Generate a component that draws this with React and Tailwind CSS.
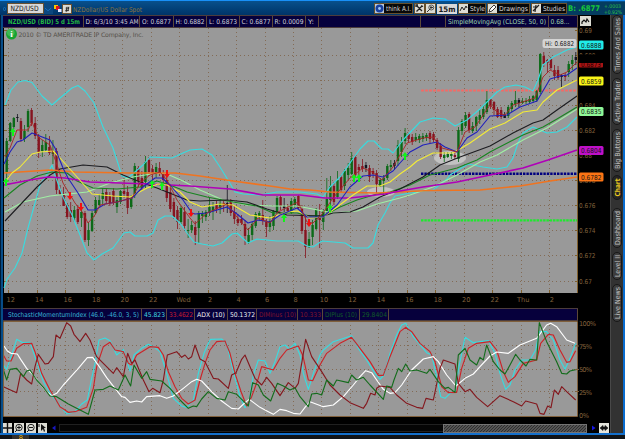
import React from "react";

const GRID_X = Array.from({ length: 20 }, (_, i) => Math.round(8.3 + i * 28.47) + 0.5);
const GRID_Y = Array.from({ length: 11 }, (_, i) => Math.round(30 + i * 25.05) + 0.5);
const TIMES = ["12", "14", "16", "18", "20", "22", "Wed", "2", "4", "6", "8", "10", "12", "14", "16", "18", "20", "22", "Thu", "2"];

// One candle per entry: high, open/close top, open/close bottom, low, colour key.
const CANDLES = `138 141 172 178 G;122 123 141 142 G;117 118 127 129 G;114 117 118 122 K;118 121 139 142 R;125 131 139 142 G;109 111 127 132 G;108 110 123 126 R;117 123 136 139 R;134 137 152 158 R;140 145 151 157 G;134 142 150 152 G;136 147 153 155 R;140 152 154 164 G;148 151 190 194 R;185 190 194 195 R;187 194 206 206 R;203 205 217 219 R;202 210 217 222 R;206 210 218 222 G;205 209 222 224 R;205 212 218 227 G;211 213 240 242 R;222 230 240 246 G;211 213 231 232 G;197 200 213 214 G;194 200 205 206 G;188 193 199 204 G;188 192 201 204 R;192 196 203 206 R;188 191 203 205 R;197 200 207 213 G;190 191 202 204 G;178 191 194 198 R;186 192 208 214 R;195 198 207 209 G;163 166 195 198 G;166 168 181 187 R;171 178 188 190 R;156 162 182 188 G;157 160 172 176 R;165 169 173 180 R;163 167 174 178 G;162 168 173 176 R;170 173 180 183 R;174 180 198 202 R;185 192 209 212 R;198 202 217 219 R;206 210 222 229 R;206 208 222 224 G;207 212 226 231 R;219 230 231 238 G;221 225 230 233 G;221 227 235 245 R;211 213 228 243 G;211 213 216 223 G;210 212 217 221 G;197 207 213 216 G;202 207 211 220 G;201 205 209 213 R;198 203 208 214 G;200 203 205 212 R;185 203 205 213 K;199 202 213 216 R;206 212 219 224 R;214 219 223 226 R;215 219 223 225 R;220 224 236 245 R;228 235 243 244 G;222 224 235 240 G;212 214 226 228 G;211 213 217 221 G;200 215 221 225 R;219 222 227 237 R;216 221 227 232 G;210 211 226 230 G;196 198 212 213 G;195 197 206 210 R;198 206 208 214 K;204 208 211 213 R;198 201 213 214 G;197 199 205 208 G;195 196 208 209 R;205 209 231 234 R;215 230 247 258 R;232 239 246 248 G;220 225 237 245 G;208 210 229 230 G;204 215 220 248 R;209 211 222 230 G;178 199 211 213 G;176 186 200 208 G;182 186 202 205 R;171 180 197 199 G;175 177 190 192 R;169 171 186 190 G;163 168 175 180 G;152 158 174 175 G;155 157 175 177 R;164 167 170 175 R;159 166 169 172 R;162 165 168 172 K;165 168 177 182 R;168 171 174 178 R;170 173 184 193 R;178 180 186 187 G;175 178 181 195 G;164 166 178 180 G;160 165 167 171 G;160 163 166 170 K;140 145 161 166 G;137 142 152 157 G;128 133 141 144 G;133 134 139 142 R;134 137 142 145 R;133 137 140 142 G;134 136 140 143 G;133 136 139 142 G;133 135 138 141 G;131 133 139 143 R;132 134 140 142 R;138 140 148 150 R;143 146 157 159 R;152 155 158 162 G;152 154 157 158 G;152 154 156 159 G;151 155 157 159 R;127 130 159 162 G;119 121 131 135 G;112 115 126 128 G;112 114 130 133 R;122 126 131 133 G;116 117 126 131 G;109 115 120 124 G;105 109 117 119 G;91 100 112 114 G;98 99 106 109 R;101 102 110 115 R;107 109 117 118 R;107 110 117 119 R;112 115 118 118 K;105 107 116 118 G;101 103 109 112 G;91 100 104 107 G;98 100 103 107 K;98 101 103 104 G;98 101 102 104 G;96 99 102 104 G;95 96 101 103 G;90 91 100 102 G;53 54 92 94 G;52 56 64 67 R;59 60 63 73 R;57 59 68 70 R;65 70 76 80 R;66 70 78 80 R;74 75 77 87 K;73 75 77 81 R;61 64 72 77 G;55 60 64 70 G;52 57 60 65 K`
  .split(";")
  .map((row) => row.split(" "));
const CANDLE_FILL = { G: "#0c6a18", R: "#861420", K: "#141420" };

const PRICE_LINES = [
  { c: "#38dce0", p: "5,105 11,90 18,82 25,80.5 32,82.5 42,96 52,105 60,98 72,88 78,85.5 85,91 94,103 103,127 113,148 122,176 128,178 143,165 150,157 172,158 183,153 190,150 202,149 212,155 220,167 228,180 235,192 243,194 260,195 277,192 300,192 317,194 323,197 330,187 340,177 350,163 360,149 368,141 374,141 382,149 388,149 393,153 403,140 420,122 433,118 445,119 455,126 467,120 480,109 490,99 497,92 505,87 516,85 525,87 533,91 538,80 543,65 553,57 567,50 577,47" },
  { c: "#38dce0", p: "4,288 7,279 15,268 22,253 28,228 35,203 40,185 48,173 52,165 56,178 63,197 72,215 80,235 87,253 94,260 102,254 113,248 124,233 130,232 135,236 147,236 153,233 158,220 165,216 172,216 180,223 187,233 194,242 202,244 213,246 222,243 232,234 237,233 248,243 257,239 277,241 298,241 307,246 313,247 322,241 345,243 353,248 368,248 373,243 378,225 385,213 390,203 395,196 410,193 433,190 447,179 450,175 468,164 483,167 497,169 507,167 513,158 518,143 523,133 533,127 547,133 557,132 567,127 577,117" },
  { c: "#a0f0a4", p: "5,212 23,202 50,196 87,192 110,183 133,177 157,173 167,174 183,181 200,190 223,200 247,205 273,206 297,206 323,211 333,213 357,211 377,204 400,198 410,195 433,187 457,175 480,162 497,155 523,140 547,128 577,109" },
  { c: "#188420", p: "4,198 20,185 37,176 52,172 67,173 77,181 93,188 117,189 140,187 157,181 170,185 187,192 207,197 233,202 257,206 273,213 297,213 310,216 323,216 340,207 357,200 377,194 390,192 410,185 430,175 457,168 477,160 490,152 523,135 543,127 557,119 577,107" },
  { c: "#1c1c20", p: "5,221 20,205 37,187 50,175 60,169 83,165 107,167 123,175 140,182 157,188 187,200 200,201 227,200 247,202 267,209 287,215 323,216 333,213 350,212 363,207 380,197 390,193 400,189 423,177 440,165 460,157 490,146 513,133 533,123 543,120 557,110 577,96" },
  { c: "#f07420", w: 1.7, p: "4,173 50,170 75,172 130,173 175,173 200,176 233,181 270,186 290,189 310,190 330,192 377,193 430,190.5 480,190 520,186 550,181 577,177" },
  { c: "#b000b8", w: 1.7, p: "4,185 30,180 48,177 65,178 90,182 150,184 190,186 230,189 263,195 300,195 325,198 350,198 385,194 400,191 423,187 457,182 490,175 523,168 548,160 577,150" },
  { c: "#f4ec38", p: "5,182 12,173 20,167 32,154 40,152 53,151 60,158 78,178 92,194 113,196 130,197 147,188 158,184 167,185 180,192 190,202 202,207 220,204 233,205 250,215 270,218 287,212 298,211 310,218 323,217 337,207 353,195 367,186 380,186 390,182 400,174 410,167 417,161 433,153 453,153 470,143 490,129 505,123 523,112 537,110 543,102 557,90 577,80" },
  { c: "#2020bc", p: "4,164 10,152 17,142 23,140 32,133 37,135 50,140 55,148 63,168 68,178 78,193 88,210 95,210 105,204 117,202 132,198 143,187 155,178 162,178 170,185 183,200 192,213 195,214 207,213 227,207 237,214 248,223 258,220 270,222 280,215 297,208 307,217 323,217 337,205 350,187 363,176 373,175 383,177 393,171 400,163 410,152 423,145 437,142 445,147 457,152 467,138 477,132 490,116 507,115 520,107 537,101 550,79 560,76 567,75 577,68" },
  { c: "#a82424", w: 0.9, p: "5,157 10,148 17,130 28,130 32,122 38,137 50,145 57,165 63,183 75,203 83,213 88,223 95,215 100,205 117,202 132,198 140,183 150,175 160,172 167,180 177,200 190,218 195,224 207,213 227,204 237,217 248,230 258,218 270,223 278,212 298,202 307,222 313,223 323,213 333,198 350,178 363,168 372,172 382,180 393,167 397,160 407,143 423,138 433,137 442,148 457,152 465,132 475,127 490,105 498,113 505,115 513,105 535,98 543,77 550,70 560,75 567,72 577,62" },
];

// Oscillator traces, digitised at three units to the pixel.
const STUDY_LINES = [
  { c: "#38dce0", p: "10,195 20,208 35,165 50,118 68,128 90,127 110,185 130,245 150,280 175,310 200,342 225,335 245,312 262,300 275,235 285,190 297,120 315,114 330,122 350,165 370,148 390,213 402,165 425,145 445,133 460,140 480,155 500,220 520,295 545,318 560,322 580,300 595,220 612,160 625,130 632,118 665,117 680,130 700,215 720,290 735,323 747,310 760,225 775,180 795,183 810,220 825,185 840,140 855,135 868,147 885,130 900,165 910,220 925,268 940,220 960,165 970,150 1000,125 1055,107 1075,145 1100,180 1125,220 1140,238 1152,225 1170,160 1190,105 1205,75 1217,70 1240,110 1280,158 1295,165 1310,230 1322,290 1335,295 1350,280 1365,275 1375,210 1395,112 1420,128 1465,122 1485,160 1500,220 1517,268 1530,255 1545,210 1565,180 1590,180 1607,150 1618,95 1640,95 1660,120 1680,180 1695,208 1710,175 1727,130" },
  { c: "#cc2428", p: "10,165 20,183 33,183 50,145 70,131 95,130 105,155 125,220 150,270 180,320 205,337 225,335 260,322 280,265 290,200 310,140 330,127 345,150 370,155 385,190 395,195 410,165 450,140 475,142 490,165 505,215 525,260 545,295 565,312 585,300 600,240 615,190 630,150 650,125 675,123 690,160 705,220 725,280 740,318 755,290 775,235 785,200 820,210 840,175 860,150 895,138 908,165 925,240 938,242 960,195 980,160 1020,130 1055,112 1080,145 1110,185 1135,226 1150,226 1170,170 1200,95 1217,82 1235,95 1260,130 1290,155 1305,185 1325,260 1345,278 1370,277 1385,205 1405,145 1430,130 1470,125 1490,150 1510,215 1525,247 1545,230 1570,190 1610,180 1622,130 1645,103 1660,105 1680,150 1700,187 1710,185 1727,152" },
  { c: "#ffffff", p: "10,135 22,153 33,160 52,162 62,178 80,205 100,225 120,252 140,275 155,287 170,280 190,255 210,233 235,205 262,173 278,172 300,203 320,233 345,265 365,290 375,292 390,307 410,303 425,306 440,290 480,287 500,295 520,288 550,265 575,245 590,238 605,243 635,275 665,303 695,325 715,327 735,308 748,298 780,322 805,335 820,343 840,328 860,332 880,340 900,342 915,322 930,305 970,320 1000,315 1030,290 1060,255 1080,230 1097,212 1115,218 1130,240 1150,268 1170,280 1185,278 1205,255 1235,210 1270,177 1300,170 1315,185 1340,225 1368,258 1395,235 1420,222 1440,200 1470,168 1490,156 1525,160 1560,135 1610,115 1640,75 1652,70 1670,80 1700,120 1725,130" },
  { c: "#84181e", p: "10,260 50,278 62,220 80,240 95,252 105,200 115,163 135,192 145,190 160,170 168,105 180,115 200,68 212,78 222,103 240,125 257,100 270,120 290,170 310,190 340,220 350,203 370,230 383,160 395,190 405,180 430,240 447,275 458,265 480,278 490,240 502,165 530,155 545,172 555,165 565,177 575,170 585,135 600,177 615,185 640,235 655,237 685,265 695,225 708,218 725,178 735,165 750,200 765,235 785,255 800,232 815,250 840,287 865,248 885,265 895,250 905,190 917,118 935,170 965,215 990,255 1020,285 1050,308 1090,325 1100,310 1112,280 1125,285 1130,265 1140,258 1170,262 1190,285 1220,310 1250,322 1268,325 1278,295 1300,300 1320,205 1330,180 1365,192 1375,250 1395,275 1410,268 1430,292 1463,320 1500,287 1540,305 1565,318 1577,303 1610,312 1620,340 1632,343 1643,318 1653,323 1663,270 1675,283 1685,260 1700,275 1727,300" },
  { c: "#146c1c", p: "10,208 20,240 30,208 50,205 70,230 80,213 90,210 110,240 130,262 150,288 170,290 205,312 265,343 285,270 310,268 330,258 355,270 375,225 392,258 402,195 425,235 440,215 450,238 485,243 510,265 540,300 565,325 580,318 590,320 605,297 625,275 650,295 675,300 685,275 710,283 735,308 745,318 758,248 775,255 790,285 812,303 832,250 850,258 870,270 885,263 900,290 925,320 935,282 950,280 965,285 980,240 1000,258 1010,240 1045,248 1055,225 1070,240 1090,232 1110,255 1150,298 1160,258 1175,262 1182,240 1195,205 1205,215 1217,192 1230,213 1250,210 1280,220 1290,208 1315,245 1335,265 1345,262 1365,277 1375,165 1395,145 1410,180 1430,195 1440,172 1450,180 1460,135 1480,185 1500,210 1515,222 1530,195 1547,163 1560,180 1578,198 1590,178 1610,180 1618,68 1640,125 1670,185 1685,220 1700,222 1710,213 1730,208" },
];

const UP_MARKS = [[6, 182], [13, 132], [152, 184], [162, 186], [284, 218], [330, 208], [354, 178], [359, 178], [405, 156]];
const DOWN_MARKS = [[70, 196], [81, 207], [167, 174], [191, 213], [309, 223]];

const PRICE_AXIS = ["0.69", "0.688", "0.686", "0.684", "0.682", "0.68", "0.678", "0.676", "0.674", "0.672", "0.67"];
const UI_FONT = "DejaVu Sans, Verdana, sans-serif";

function PriceChart() {
  return (
    <svg className="block h-[280px] w-[607px] shrink-0 overflow-visible" viewBox="3 28 607 280" fontFamily={UI_FONT}>
      <rect x="3" y="28" width="607" height="280" fill="#000" />
      <rect x="4" y="28" width="573" height="265" fill="#999999" />
      <g stroke="#80644a" strokeWidth="1" strokeDasharray="1 3" opacity=".85">
        {GRID_X.map((x) => <path key={x} d={`M${x} 28V293`} />)}
        {GRID_Y.slice(1).map((y) => <path key={y} d={`M4 ${y}H577`} />)}
      </g>
      <g stroke="#80602c">
        {GRID_X.map((x) => <path key={x} d={`M${x} 290V293`} />)}
        {GRID_Y.map((y) => <path key={y} d={`M4 ${y}h3M575 ${y}h3`} />)}
      </g>
      <ellipse cx="381" cy="192" rx="14" ry="5" fill="#ccc" opacity=".8" />
      <ellipse cx="450" cy="158" rx="16" ry="7" fill="#ccc" opacity=".8" />
      <path d="M421 90.5H577" stroke="#f06c68" strokeWidth="2" strokeDasharray="3 1" />
      <path d="M421 173.8H577" stroke="#000080" strokeWidth="2.4" strokeDasharray="2.4 1" />
      <path d="M421 220.3H577" stroke="#20e830" strokeWidth="2.2" strokeDasharray="2.5 .8" />
      {CANDLES.map(([hi, top, bottom, lo, tone], i) => {
        const x = 6.7 + i * 3.557;
        return (
          <g key={i} fill={CANDLE_FILL[tone]}>
            <rect x={x - 0.4} y={hi} width=".8" height={lo - hi} />
            <rect x={x - 1.2} y={top} width="2.4" height={Math.max(1, bottom - top)} />
          </g>
        );
      })}
      {PRICE_LINES.map((line, i) => (
        <polyline key={i} points={line.p} fill="none" stroke={line.c} strokeWidth={line.w || 1.1} strokeLinejoin="round" />
      ))}
      {UP_MARKS.map(([x, y]) => <path key={`${x}`} d={`M${x} ${y - 4}l3 4h-2v4h-2v-4h-2z`} fill="#10f418" />)}
      {DOWN_MARKS.map(([x, y]) => <path key={`${x}`} d={`M${x} ${y + 4}l-3 -4h2v-4h2v4h2z`} fill="#f41010" />)}
      <path d="M577.5 28V293" stroke="#80602c" />
      <circle cx="11.5" cy="34" r="5.5" fill="#18a430" />
      <circle cx="10.8" cy="32.5" r="3.8" fill="#58c868" opacity=".6" />
      <text x="11.5" y="37.4" fontSize="9" fontWeight="bold" textAnchor="middle" fill="#fff" fontFamily="Liberation Serif, serif">i</text>
      <text x="18.5" y="37" fontSize="6.2" fill="#55504a" textLength="125">2010 © TD AMERITRADE IP Company, Inc.</text>
      <rect x="542.5" y="39" width="34" height="9" rx="2" fill="#d4d4d4" />
      <text x="545" y="46.3" fontSize="6.6" fill="#181818" textLength="29" lengthAdjust="spacingAndGlyphs">Hi: 0.6882</text>
      <g fill="#80603c" fontSize="6.6">
        {PRICE_AXIS.map((label, i) => (
          <text key={label} x="579" y={33 + i * 25.05} textLength={label.length * 3.7 - 2} lengthAdjust="spacingAndGlyphs">{label}</text>
        ))}
        {TIMES.map((label, i) => <text key={i} x={10.8 + i * 28.47 + (i % 18 === 6 ? 2 : 0)} y="301.5" textAnchor="middle">{label}</text>)}
      </g>
      <rect x="578" y="54.5" width="26" height="8" fill="#000" />
      <rect x="579" y="62" width="24" height="5.5" rx="1" fill="#a81414" />
      <text x="581" y="67.3" fontSize="6.8" fill="#200" textLength="20" lengthAdjust="spacingAndGlyphs">0.6873</text>
      <rect x="579" y="58" width="24" height="5" fill="#000" />
      {[
        [45, "0.6888", "#20ece8"],
        [81, "0.6859", "#f8f418"],
        [111.5, "0.6835", "#90f898"],
        [150.5, "0.6804", "#c010c8"],
        [177, "0.6782", "#fc7414"],
      ].map(([y, label, fill]) => (
        <g key={label}>
          <rect x="579" y={y - 4.5} width="24.5" height="9" rx="1.5" fill={fill} />
          <text x="581" y={y + 2.6} fontSize="6.8" fill="#141414" textLength="20.5" lengthAdjust="spacingAndGlyphs">{label}</text>
        </g>
      ))}
    </svg>
  );
}

function StudyChart() {
  return (
    <svg className="block h-[102px] w-[607px] shrink-0 overflow-visible" viewBox="3 321 607 102" fontFamily={UI_FONT}>
      <rect x="3" y="321" width="607" height="102" fill="#000" />
      <rect x="4" y="321" width="573" height="95" fill="#999999" />
      <g stroke="#80644a" strokeDasharray="1 3" opacity=".85">
        {GRID_X.map((x) => <path key={x} d={`M${x} 321V416`} />)}
        {[346, 369.5, 391.5].map((y) => <path key={y} d={`M4 ${Math.round(y) - 0.5}H577`} />)}
      </g>
      <g transform="translate(0 300) scale(.33333)" fill="none" strokeWidth="3.4" strokeLinejoin="round">
        {STUDY_LINES.map((line) => <polyline key={line.c} points={line.p} stroke={line.c} />)}
      </g>
      <path d="M3.5 321.5H577.5V416.5H3.5z" fill="none" stroke="#80603c" />
      <path d="M575 346h4M575 369.5h4M575 391.5h4" stroke="#80603c" />
      <g fill="#80603c" fontSize="6.6">
        <text x="579" y="326" textLength="17">100%</text>
        <text x="579" y="349" textLength="13">75%</text>
        <text x="579" y="372" textLength="13">50%</text>
        <text x="579" y="394.5" textLength="13">25%</text>
        <text x="579" y="418" textLength="10">0%</text>
      </g>
    </svg>
  );
}

function Strip({ cells }) {
  return (
    <div className="flex h-[13px] w-[575px] shrink-0 border-y border-[#4c3c3c] bg-[#06003c]">
      {cells.map(([width, text, tone, pad, textWidth], i) => (
        <div key={i} className="h-full shrink-0 overflow-hidden border-r border-[#5c4838]" style={{ width }}>
          <svg className="block h-[11px] w-full" fontFamily={UI_FONT}>
            {text && (
              <text x={pad ?? 2} y="8" fontSize="6.7" fill={tone} textLength={textWidth} lengthAdjust="spacingAndGlyphs" fontWeight={text.startsWith("NZD") ? "bold" : "normal"}>{text}</text>
            )}
          </svg>
        </div>
      ))}
    </div>
  );
}

function WrenchIcon() {
  return (
    <svg className="h-[9px] w-[9px] shrink-0 bg-[#dcdcd4]" viewBox="0 0 9 9">
      <path d="M1.5 7.5L7 2M2 2L7 7M1 3V1h2" fill="none" stroke="#222" strokeWidth="1.3" />
      <path d="M6.5 1L8 3" stroke="#222" />
    </svg>
  );
}

function ToolButton({ width, label, labelWidth, children }) {
  return (
    <div className="flex h-[11px] shrink-0 items-center gap-[2px] overflow-hidden border border-[#66502c] bg-[#080808]" style={{ width }}>
      {children}
      {label && (
        <svg className="h-[9px] shrink-0 overflow-visible" style={{ width: labelWidth }} fontFamily={UI_FONT}>
          <text x="0" y="7" fontSize="6.8" fill="#d8d8d8" textLength={labelWidth} lengthAdjust="spacingAndGlyphs">{label}</text>
        </svg>
      )}
    </div>
  );
}

function TitleBar() {
  return (
    <header className="flex h-[15px] w-full shrink-0 items-center border-t border-[#1890f8] bg-linear-to-b from-[#08508c] to-[#003468] pt-px">
      <div className="ml-[3px] h-[4px] w-[3px] shrink-0 rounded-full border border-[#1870b8]" />
      <svg className="ml-px h-[11px] w-[37px] shrink-0 border border-[#685030] bg-[#d8d8d8]" viewBox="0 0 35 9" fontFamily={UI_FONT}>
        <text x="2.5" y="7.3" fontSize="7.2" fill="#101010" textLength="28" lengthAdjust="spacingAndGlyphs">NZD/USD</text>
      </svg>
      <svg className="h-[11px] w-[9px] shrink-0 bg-[#0c4880]" viewBox="0 0 10 11"><path d="M1 5l3.5 3L8 5" fill="none" stroke="#1c70c0" /></svg>
      <svg className="ml-px h-[10px] w-[8px] shrink-0" viewBox="0 0 8 10">
        <rect x="0" y="1" width="4" height="4" fill="#f4c800" />
        <rect x="2" y="2" width="3.5" height="4" fill="#e01020" />
        <rect x="4" y="5" width="3.5" height="3" fill="#e8e8ff" />
      </svg>
      <svg className="h-[10px] w-[10px] shrink-0 border border-[#685030] bg-[#dcdcd4]" viewBox="0 0 9 9"><path d="M2.5 6h4M4.5 2L3.5 8M6.5 2L5.5 7M3 3.5h4" stroke="#222" fill="none" /></svg>
      <svg className="ml-px h-[12px] w-[80px] shrink-0" viewBox="0 0 80 12" fontFamily={UI_FONT}>
        <text x="0" y="8.6" fontSize="6.7" fill="#8c7440" textLength="69" lengthAdjust="spacingAndGlyphs">NZDollar/US Dollar Spot</text>
      </svg>
      <div className="grow" />
      <ToolButton width="39px" label="think A.I." labelWidth="25">
        <svg className="h-[9px] w-[9px] shrink-0 bg-[#b8c8d8]" viewBox="0 0 9 9"><circle cx="4.5" cy="4.5" r="4" fill="#1840a0" /><circle cx="4.5" cy="4.5" r="1.4" fill="#a0c8f8" /></svg>
      </ToolButton>
      <div className="w-px shrink-0" />
      <ToolButton width="11px"><WrenchIcon /></ToolButton>
      <ToolButton width="11px">
        <svg className="h-[9px] w-[9px] shrink-0 bg-[#dcdcd4]" viewBox="0 0 9 9"><circle cx="5.3" cy="3.5" r="2.5" fill="none" stroke="#555" /><path d="M4 5L1 8M5 2v3M4 3.5h3" stroke="#333" /></svg>
      </ToolButton>
      <svg className="mx-px h-[10px] w-[20px] shrink-0 bg-[#d8d8d8]" viewBox="0 0 20 10" fontFamily={UI_FONT}>
        <text x="1.5" y="8" fontSize="7.6" fontWeight="bold" fill="#181818" textLength="17" lengthAdjust="spacingAndGlyphs">15m</text>
      </svg>
      <ToolButton width="28px" label="Style" labelWidth="15">
        <svg className="h-[9px] w-[9px] shrink-0 bg-[#dcdcd4]" viewBox="0 0 9 9"><path d="M1 7L3 3l2 3 2-4 1 2" fill="none" stroke="#222" /></svg>
      </ToolButton>
      <div className="w-px shrink-0" />
      <ToolButton width="43px" label="Drawings" labelWidth="29">
        <svg className="h-[9px] w-[9px] shrink-0 bg-[#dcdcd4]" viewBox="0 0 9 9"><path d="M1 8l1-3 4-4 2 2-4 4z" fill="#fff" stroke="#222" strokeWidth=".9" /></svg>
      </ToolButton>
      <div className="w-px shrink-0" />
      <ToolButton width="36px" label="Studies" labelWidth="22">
        <svg className="h-[9px] w-[9px] shrink-0 bg-[#dcdcd4]" viewBox="0 0 9 9"><path d="M1 7l6-6M4 1L3 8M1 3h3" stroke="#222" fill="none" strokeWidth="1.2" /></svg>
      </ToolButton>
      <svg className="h-[13px] w-[58px] shrink-0 bg-[#043c60]" viewBox="0 0 58 13" fontFamily={UI_FONT}>
        <text x="1" y="9" fontSize="7.8" fontWeight="bold" fill="#18c838" textLength="32" lengthAdjust="spacingAndGlyphs">B: .6877</text>
        <text x="37" y="5.6" fontSize="5.2" fill="#30c048" textLength="17" lengthAdjust="spacingAndGlyphs">+.0003</text>
        <text x="37" y="11.6" fontSize="5.2" fill="#30c048" textLength="18" lengthAdjust="spacingAndGlyphs">+0.92%</text>
      </svg>
    </header>
  );
}

const TABS = [
  ["Times And Sales", 59, false],
  ["Active Trader", 47, false],
  ["Big Buttons", 43, false],
  ["Chart", 25, true],
  ["Dashboard", 40, false],
  ["Level II", 28, false],
  ["Live News", 38, false],
];
const TAB_GAPS = [0, 4, 4, 3, 8, 4, 4];

function SideTabs() {
  return (
    <aside className="flex h-[418px] w-[13px] shrink-0 flex-col items-end border-l border-[#484848] bg-[#323232] pr-px">
      {TABS.map(([label, height, active], i) => (
        <div key={label} className={active ? "w-[10px] shrink-0 rounded-[5px] border border-[#181818] bg-[#242424]" : "w-[10px] shrink-0 rounded-[5px] border border-[#181818] bg-[#3c3c3c]"} style={{ height, marginTop: TAB_GAPS[i] }}>
          <svg className="block h-full w-[8px] overflow-visible" fontFamily={UI_FONT}>
            <text transform={`translate(6.6 ${height / 2 - 1}) rotate(-90)`} textAnchor="middle" fontSize="7" fontWeight={active ? "bold" : "normal"} fill={active ? "#e8c820" : "#c0c0c0"} textLength={active ? 18 : height - 6} lengthAdjust="spacingAndGlyphs">{label}</text>
          </svg>
        </div>
      ))}
    </aside>
  );
}

function ScrollRow() {
  return (
    <div className="flex h-[10px] w-[607px] shrink-0 items-center bg-black">
      <div className="flex gap-[2px]">
        <svg className="h-[10px] w-[9px] bg-[#dcdcd4]" viewBox="0 0 9 10"><path d="M4.5 0v10M0 5h9" stroke="#111" strokeWidth="1.4" /></svg>
        {["M3 4.5h4M5 2.5v4", "M3 4.5h4"].map((d) => (
          <svg key={d} className="h-[10px] w-[10px] bg-[#dcdcd4]" viewBox="0 0 10 10"><circle cx="5" cy="4.5" r="3.2" fill="none" stroke="#222" /><path d={`${d}M1 9l2-2`} stroke="#111" /></svg>
        ))}
        <svg className="h-[10px] w-[9px] bg-[#dcdcd4]" viewBox="0 0 9 10"><path d="M3 1v7l2-2 1 3 1-1-1-3h2z" fill="#111" /><path d="M1 1v3" stroke="#111" /></svg>
      </div>
      <svg className="ml-[2px] h-[10px] w-[10px]" viewBox="0 0 10 10"><path d="M6.5 2.5v5L3 5z" fill="#1818c0" /></svg>
      <div className="h-[8px] w-[384px] border-y border-l border-[#202020] bg-[#050505]" />
      <svg className="h-[9px] w-[144px]" viewBox="0 0 144 9">
        <defs>
          <pattern id="hatch" width="3" height="3" patternUnits="userSpaceOnUse">
            <rect width="3" height="3" fill="#545454" />
            <path d="M0 3L3 0" stroke="#303030" />
          </pattern>
        </defs>
        <rect x=".5" y=".5" width="143" height="8" fill="url(#hatch)" stroke="#747474" />
      </svg>
      <svg className="h-[10px] w-[10px]" viewBox="0 0 10 10"><path d="M5 2.5v5L8.5 5z" fill="#1818e0" /></svg>
      <svg className="ml-[2px] h-[10px] w-[10px] bg-[#e4e4dc]" viewBox="0 0 10 10"><path d="M1 5l3-2.5V4h2V2.5L9 5 6 7.5V6H4v1.5z" fill="#111" stroke="#111" strokeWidth=".6" /></svg>
    </div>
  );
}

const W = "#d0d0d8";
const TOP_CELLS = [
  ["81px", "NZD/USD (BID) 5 d 15m", "#20b844", 5, 72],
  ["56px", "D: 6/3/10 3:45 AM", W, 1.5, 53],
  ["34px", "O: 0.6877", W, 2, 29],
  ["33px", "H: 0.6882", W, 1.5, 29],
  ["33px", "L: 0.6873", W, 2, 28],
  ["33px", "C: 0.6877", W, 1.5, 29],
  ["33px", "R: 0.0009", W, 1.5, 29],
  ["13px", "Y:", W, 2, 6],
  ["102px", ""],
  ["25px", ""],
  ["103px", "SimpleMovingAvg (CLOSE, 50, 0)", "#a0d8b0", 2, 98],
  ["29px", "0.68...", "#a0d8b0", 1.5, 19],
];
const STUDY_CELLS = [
  ["139px", "StochasticMomentumIndex (46.0, -46.0, 3, 5)", "#38b8d8", 5, 131],
  ["25px", "45.823", "#40d8e0", 2, 21],
  ["28px", "33.4622", "#d01c30", 2, 24],
  ["33px", "ADX (10)", "#f0f0f0", 2, 28],
  ["29px", "50.1372", "#f0f0f0", 2, 25],
  ["41px", "DIMinus (10)", "#80142c", 2, 37],
  ["25px", "10.333", "#80142c", 2, 21],
  ["37px", "DIPlus (10)", "#105c28", 2, 32],
  ["29px", "29.8404", "#105c28", 2, 25],
  ["189px", ""],
];

export default function App() {
  return (
    <div className="flex h-[439px] w-[625px] flex-col overflow-hidden bg-black">
      <TitleBar />
      <div className="flex h-[418px] shrink-0">
        <div className="w-[3px] shrink-0 border-l border-[#001c38] bg-[#064c88]" />
        <main className="flex w-[607px] shrink-0 flex-col bg-black">
          <div className="flex h-[13px] shrink-0">
            <Strip cells={TOP_CELLS} />
            <svg className="mt-px ml-[2px] h-[10px] w-[11px] bg-[#dcdcd4]" viewBox="0 0 11 10"><path d="M2 8V6l2-2 2 2 1-3 2 3" fill="none" stroke="#111" strokeWidth="1.2" /></svg>
          </div>
          <PriceChart />
          <Strip cells={STUDY_CELLS} />
          <StudyChart />
          <ScrollRow />
        </main>
        <SideTabs />
        <div className="w-[2px] shrink-0 bg-[#086cd0]" />
      </div>
      <footer className="flex h-[6px] shrink-0 flex-col bg-[#101418]">
        <div className="h-[2px] shrink-0 bg-[#1470cc]" />
        <svg className="ml-[12px] block h-[4px] w-[20px]" viewBox="0 0 20 4"><rect width="17" height="4" fill="#34312c" /><circle cx="9" cy="1.4" r="1.3" fill="none" stroke="#c49620" /><circle cx="9" cy="4" r="1.5" fill="none" stroke="#c49620" /></svg>
      </footer>
    </div>
  );
}
